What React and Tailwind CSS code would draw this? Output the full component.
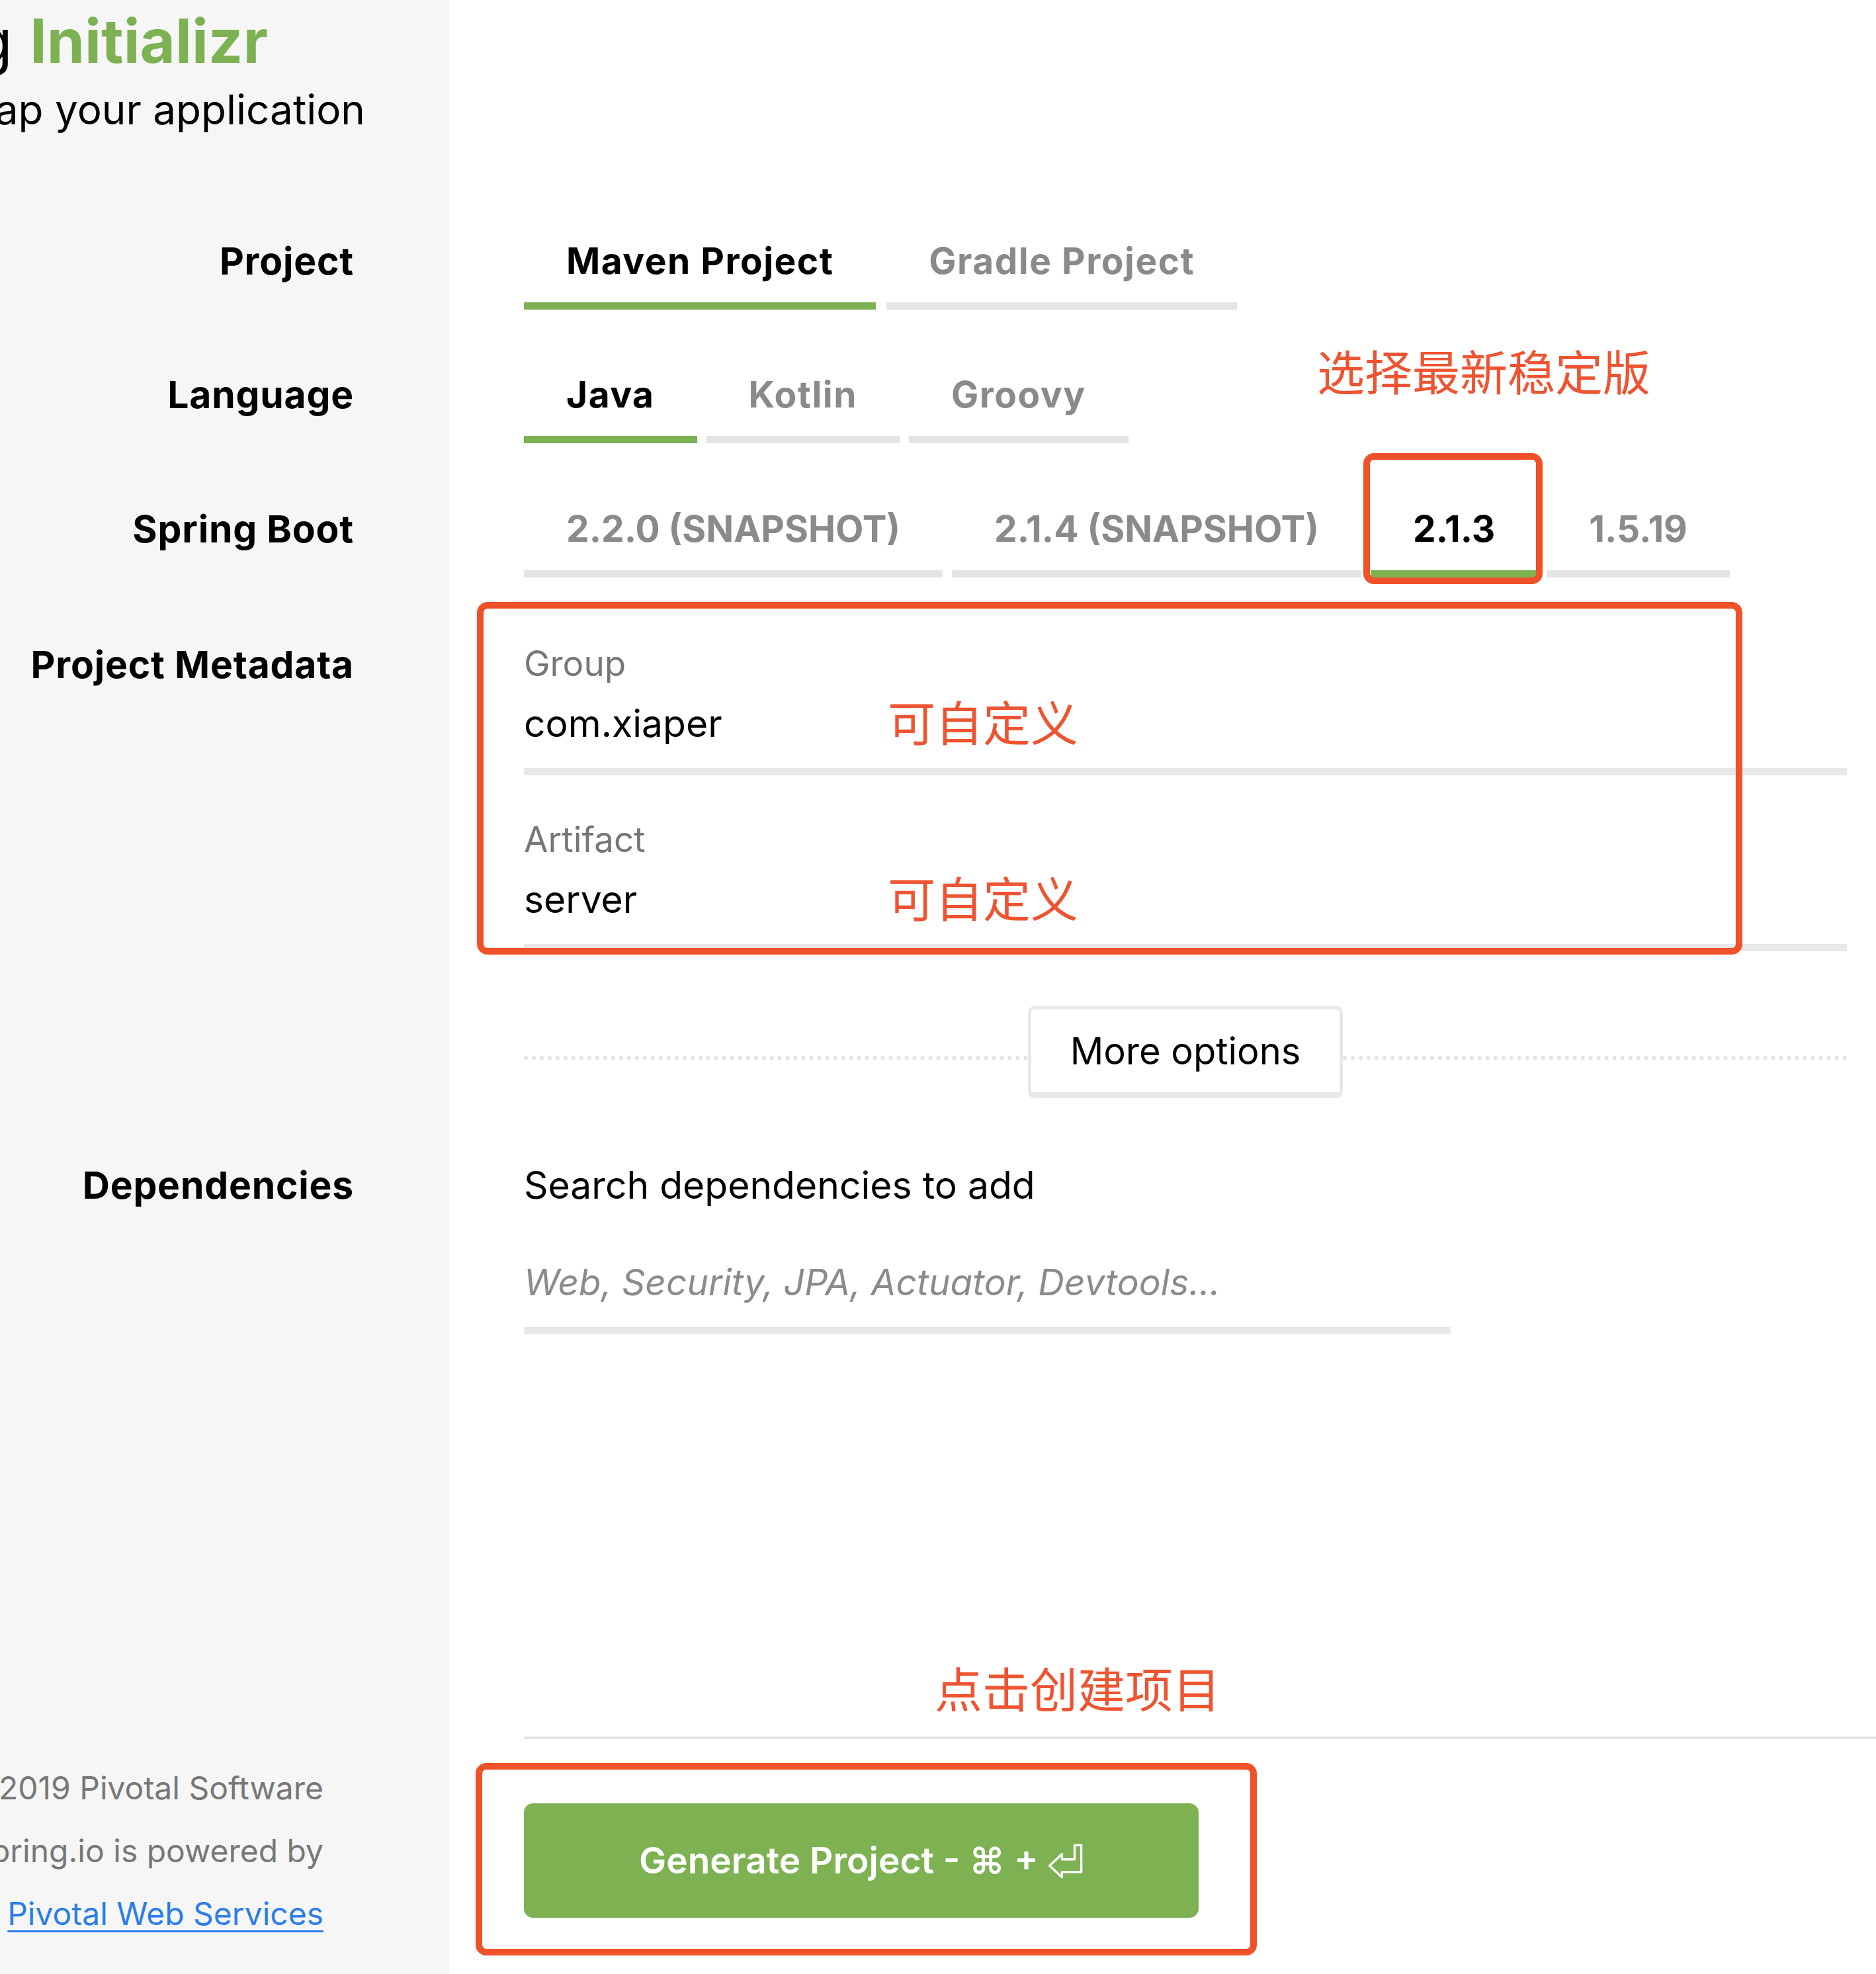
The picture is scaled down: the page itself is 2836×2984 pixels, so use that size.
import React from 'react'

const GREEN = 'bg-[#7db152]'

function Tab({ label, active, tight, children }) {
  return (
    <div
      className={`relative px-[64px] pb-[30px] border-b-[11px] text-center whitespace-nowrap text-[55px] leading-[65px] font-bold ${
        tight ? 'tracking-normal' : 'tracking-[1.5px]'
      } ${active ? 'border-[#7db152] text-black' : 'border-[#e4e4e4] text-[#8a8a8a]'}`}
    >
      {label}
      {children}
    </div>
  )
}

function Row({ label, className = '', children }) {
  return (
    <div className={`grid grid-cols-[679px_1fr] ${className}`}>
      <div className="pr-[144px] text-right text-[57px] tracking-[0.8px] leading-[65px] font-bold whitespace-nowrap">
        {label}
      </div>
      <div className="pl-[113px] pr-[44px] min-w-0">{children}</div>
    </div>
  )
}

function Field({ label, value, className = '' }) {
  return (
    <div className={className}>
      <div className="text-[53px] leading-[62px] text-[#777777]">{label}</div>
      <div className="mt-[17px] pb-[24px] border-b-[11px] border-[#e8e8e8]">
        <div className="h-[86px] flex items-center">
          <div className="w-[550px] text-[57px] text-black">{value}</div>
          <div className="text-[72px] leading-none text-[#ee5431]">可自定义</div>
        </div>
      </div>
    </div>
  )
}

function ReturnKey() {
  return (
    <svg width="54" height="54" viewBox="0 0 24 24" fill="none" stroke="white" strokeWidth="1.5" strokeLinejoin="round">
      <path d="M18 1.5 H22.5 V19.5 H9.5 V23 L1.2 15.2 L9.5 7.4 V11 H18 Z" />
    </svg>
  )
}

export default function App() {
  return (
    <div className="w-[2836px] h-[2984px] flex flex-col overflow-hidden text-black bg-[linear-gradient(to_right,#f6f6f6_679px,#ffffff_679px)] font-['Inter','Noto_Sans_CJK_SC',sans-serif]">

      {/* ── Header ───────────────────────────── */}
      <div className="grid grid-cols-[679px_1fr] h-[362px]">
        <div className="overflow-hidden">
          <div className="flex justify-end w-[405px] pt-[16px]">
            <div className="shrink-0 whitespace-nowrap text-[92px] leading-none">
              <span className="font-normal">Spring </span>
              <span className="font-bold text-[#7db152]">Initializr</span>
            </div>
          </div>
          <div className="flex justify-end w-[552px] mt-[27px]">
            <div className="shrink-0 whitespace-nowrap text-[62px] leading-none">
              Bootstrap your application
            </div>
          </div>
        </div>
        <div />
      </div>

      {/* ── Project ──────────────────────────── */}
      <Row label="Project">
        <div className="flex gap-[16px]">
          <Tab active label="Maven Project" />
          <Tab label="Gradle Project" />
        </div>
      </Row>

      {/* ── Language ─────────────────────────── */}
      <Row label="Language" className="mt-[96px]">
        <div className="relative flex gap-[14px]">
          <Tab active label="Java" />
          <Tab label="Kotlin" />
          <Tab label="Groovy" />
          <div className="absolute left-[1199px] -top-[36px] text-[72px] leading-none text-[#ee5431] whitespace-nowrap">
            选择最新稳定版
          </div>
        </div>
      </Row>

      {/* ── Spring Boot ──────────────────────── */}
      <Row label="Spring Boot" className="mt-[97px]">
        <div className="flex gap-[14px]">
          <Tab tight label="2.2.0 (SNAPSHOT)" />
          <Tab tight label="2.1.4 (SNAPSHOT)" />
          <Tab tight active label="2.1.3">
            <div className="absolute -left-[11px] -right-[8px] -top-[82px] -bottom-[21px] border-[10px] border-[#ef5128] rounded-[16px]" />
          </Tab>
          <Tab tight label="1.5.19" />
        </div>
      </Row>

      {/* ── Project Metadata ─────────────────── */}
      <Row label="Project Metadata" className="mt-[99px]">
        <div className="relative">
          <Field label="Group" value="com.xiaper" />
          <Field label="Artifact" value="server" className="mt-[66px]" />
          <div className="absolute -left-[71px] -top-[62px] right-[158px] -bottom-[5px] border-[10px] border-[#ef5128] rounded-[16px]" />
        </div>
      </Row>

      {/* ── More options ─────────────────────── */}
      <div className="grid grid-cols-[679px_1fr] mt-[83px]">
        <div />
        <div className="pl-[113px] pr-[44px] flex items-center">
          <div className="flex-1 mt-[16px] border-t-[6px] border-dotted border-[#e2e2e2]" />
          <div className="w-[476px] h-[139px] border-[5px] border-b-[9px] border-[#e8e8e8] rounded-[10px] flex items-center justify-center text-[56px]">
            More options
          </div>
          <div className="flex-1 mt-[16px] border-t-[6px] border-dotted border-[#e2e2e2]" />
        </div>
      </div>

      {/* ── Dependencies ─────────────────────── */}
      <Row label="Dependencies" className="mt-[99px]">
        <div className="text-[57px] leading-[65px]">Search dependencies to add</div>
        <div className="mt-[82px] w-[1401px] pb-[35px] border-b-[11px] border-[#e8e8e8] text-[55px] leading-[65px] italic text-[#8b8b8b]">
          Web, Security, JPA, Actuator, Devtools...
        </div>
      </Row>

      {/* ── Footer / Generate ────────────────── */}
      <div className="grid grid-cols-[679px_1fr] mt-auto h-[469px]">
        <div className="overflow-hidden flex flex-col justify-end pb-[44px] text-[48px] leading-[95px] text-[#777777]">
          <div className="flex justify-end w-[489px]">
            <span className="shrink-0 whitespace-nowrap">© 2019 Pivotal Software</span>
          </div>
          <div className="flex justify-end w-[489px]">
            <span className="shrink-0 whitespace-nowrap">start.spring.io is powered by</span>
          </div>
          <div className="flex justify-end w-[489px]">
            <span className="shrink-0 whitespace-nowrap text-[#2b7de8] underline underline-offset-[8px] decoration-[3px]">
              Pivotal Web Services
            </span>
          </div>
        </div>
        <div className="pl-[113px]">
          <div className="pl-[621px] text-[72px] leading-[80px] text-[#ee5431]">点击创建项目</div>
          <div className="mt-[30px] h-[4px] bg-[#e5e5e5]" />
          <div className={`relative mt-[97px] w-[1020px] h-[173px] ${GREEN} rounded-[14px] flex items-center justify-center gap-[14px] text-white text-[55px] font-semibold`}>
            <span className="font-['Inter','DejaVu_Sans',sans-serif]">Generate Project - ⌘ +</span>
            <ReturnKey />
            <div className="absolute -left-[73px] -right-[88px] -top-[61px] -bottom-[57px] border-[10px] border-[#ef5128] rounded-[16px]" />
          </div>
        </div>
      </div>
    </div>
  )
}
